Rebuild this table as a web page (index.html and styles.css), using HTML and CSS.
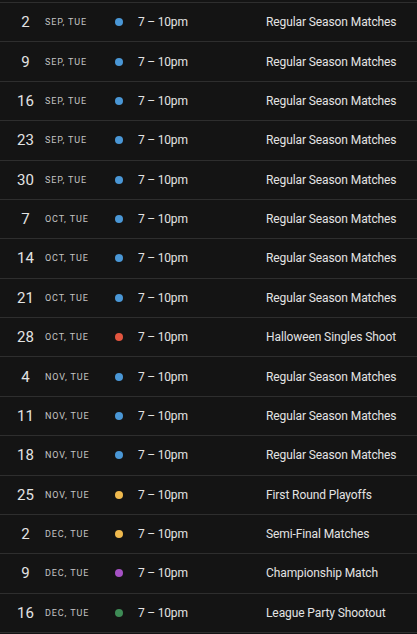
FILE: index.html
```html
<!DOCTYPE html>
<html>
<head>
<meta charset="utf-8">
<link rel="stylesheet" href="styles.css">
</head>
<body>
<div class="list">
  <div class="row"><span class="day">2</span><span class="mon">Sep, Tue</span><span class="dot blue"></span><span class="time">7 – 10pm</span><span class="title">Regular Season Matches</span></div>
  <div class="row"><span class="day">9</span><span class="mon">Sep, Tue</span><span class="dot blue"></span><span class="time">7 – 10pm</span><span class="title">Regular Season Matches</span></div>
  <div class="row"><span class="day">16</span><span class="mon">Sep, Tue</span><span class="dot blue"></span><span class="time">7 – 10pm</span><span class="title">Regular Season Matches</span></div>
  <div class="row"><span class="day">23</span><span class="mon">Sep, Tue</span><span class="dot blue"></span><span class="time">7 – 10pm</span><span class="title">Regular Season Matches</span></div>
  <div class="row"><span class="day">30</span><span class="mon">Sep, Tue</span><span class="dot blue"></span><span class="time">7 – 10pm</span><span class="title">Regular Season Matches</span></div>
  <div class="row"><span class="day">7</span><span class="mon">Oct, Tue</span><span class="dot blue"></span><span class="time">7 – 10pm</span><span class="title">Regular Season Matches</span></div>
  <div class="row"><span class="day">14</span><span class="mon">Oct, Tue</span><span class="dot blue"></span><span class="time">7 – 10pm</span><span class="title">Regular Season Matches</span></div>
  <div class="row"><span class="day">21</span><span class="mon">Oct, Tue</span><span class="dot blue"></span><span class="time">7 – 10pm</span><span class="title">Regular Season Matches</span></div>
  <div class="row"><span class="day">28</span><span class="mon">Oct, Tue</span><span class="dot red"></span><span class="time">7 – 10pm</span><span class="title">Halloween Singles Shoot</span></div>
  <div class="row"><span class="day">4</span><span class="mon">Nov, Tue</span><span class="dot blue"></span><span class="time">7 – 10pm</span><span class="title">Regular Season Matches</span></div>
  <div class="row"><span class="day">11</span><span class="mon">Nov, Tue</span><span class="dot blue"></span><span class="time">7 – 10pm</span><span class="title">Regular Season Matches</span></div>
  <div class="row"><span class="day">18</span><span class="mon">Nov, Tue</span><span class="dot blue"></span><span class="time">7 – 10pm</span><span class="title">Regular Season Matches</span></div>
  <div class="row"><span class="day">25</span><span class="mon">Nov, Tue</span><span class="dot yellow"></span><span class="time">7 – 10pm</span><span class="title">First Round Playoffs</span></div>
  <div class="row"><span class="day">2</span><span class="mon">Dec, Tue</span><span class="dot yellow"></span><span class="time">7 – 10pm</span><span class="title">Semi-Final Matches</span></div>
  <div class="row"><span class="day">9</span><span class="mon">Dec, Tue</span><span class="dot purple"></span><span class="time">7 – 10pm</span><span class="title">Championship Match</span></div>
  <div class="row"><span class="day">16</span><span class="mon">Dec, Tue</span><span class="dot green"></span><span class="time">7 – 10pm</span><span class="title">League Party Shootout</span></div>
</div>
</body>
</html>
```
FILE: styles.css
```css
html, body {
  margin: 0;
  padding: 0;
  background: #141414;
}
body {
  font-family: Roboto, "Noto Sans", sans-serif;
  color: #e3e3e3;
  overflow: hidden;
}
.list {
  padding-top: 2px;
}
.row {
  box-sizing: border-box;
  height: 39.375px;
  border-top: 1px solid #2e2e2e;
  display: grid;
  grid-template-columns: 38px 70px 8px 143px 1fr;
  align-items: center;
  padding-left: 7px;
}
.row:last-child {
  border-bottom: 1px solid #2e2e2e;
  height: 40.375px;
}
.day {
  text-align: center;
  font-size: 15px;
  padding-right: 1px;
}
.mon {
  font-size: 9px;
  text-transform: uppercase;
  letter-spacing: 0.9px;
  color: #c4c4c4;
}
.dot {
  width: 8px;
  height: 8px;
  border-radius: 50%;
}
.time {
  font-size: 12px;
  padding-left: 15px;
  letter-spacing: -0.2px;
}
.title {
  font-size: 12px;
  letter-spacing: -0.1px;
}
.blue { background: #4a97d6; }
.red { background: #e2553f; }
.yellow { background: #efb94e; }
.purple { background: #a551c4; }
.green { background: #3e8c56; }
```
